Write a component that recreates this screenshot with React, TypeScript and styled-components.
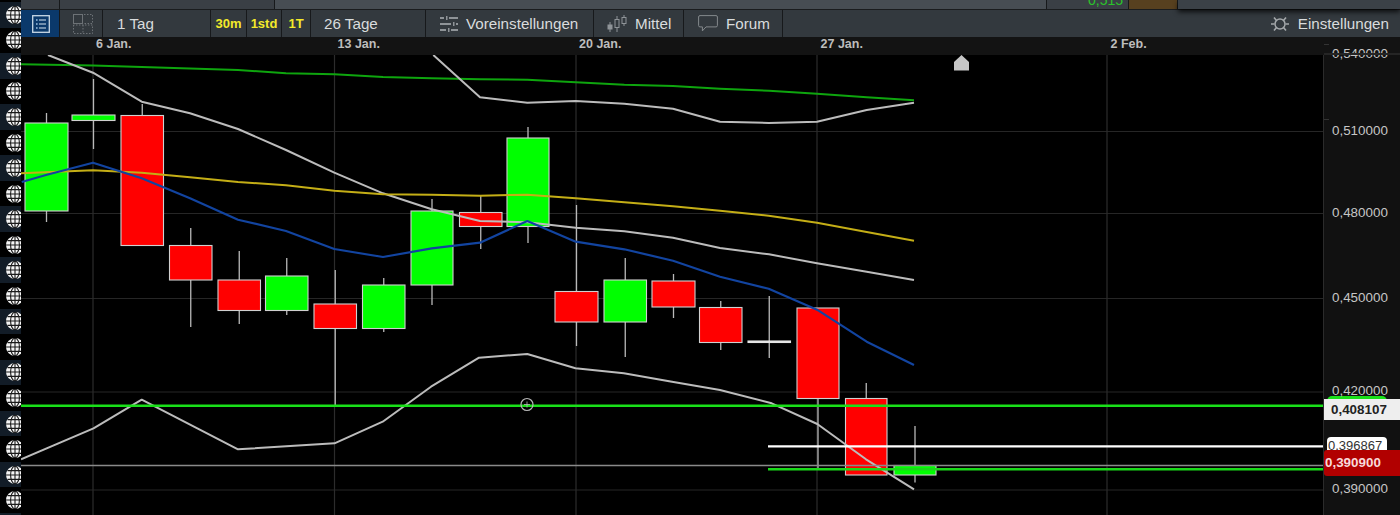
import React from "react";
import styled, { createGlobalStyle } from "styled-components";

const Global = createGlobalStyle`
  html, body { margin: 0; padding: 0; background: #000; overflow: hidden; }
  * { box-sizing: border-box; }
`;

const Frame = styled.div`
  display: grid;
  grid-template-columns: 21px 1fr;
  width: 1400px;
  height: 515px;
  overflow: hidden;
  background: #000;
  font-family: "Liberation Sans", Arial, sans-serif;
`;

const Rail = styled.div`
  display: flex;
  flex-direction: column;
  height: 515px;
  padding-top: 2px;
  overflow: hidden;
`;

const RailCell = styled.div`
  flex: 0 0 25.55px;
  display: flex;
  align-items: center;
  padding-left: 6px;
  overflow: hidden;
  background: #000;
  &:nth-child(odd) { background: #121c27; }
`;

const Main = styled.div`
  display: flex;
  flex-direction: column;
  min-width: 0;
`;

const TopStrip = styled.div`
  display: flex;
  flex: 0 0 9px;
  position: relative;
  z-index: 3;
`;

const StripCell = styled.div<{ $w: number; $bg: string }>`
  flex: 0 0 ${(p) => p.$w}px;
  background: ${(p) => p.$bg};
  border-right: 1px solid #17191b;
  overflow: hidden;
`;

const StripPrice = styled(StripCell)`
  display: flex;
  justify-content: flex-end;
  padding-right: 5px;
  color: #2ac42a;
  font-size: 14px;
  line-height: 14px;
`;

const StripPriceText = styled.span`
  margin-top: -7px;
`;

const StripPanel = styled.div`
  flex: 1;
  background: #3b4147;
  box-shadow: 0 3px 5px rgba(0, 0, 0, 0.75);
`;

const Toolbar = styled.div`
  display: flex;
  flex: 0 0 28px;
  align-items: stretch;
  background: #33393e;
  border-top: 1px solid #1a1c1e;
  color: #d9dcdd;
  font-size: 15.2px;
`;

const ToolItem = styled.div<{ $w: number; $pad?: number; $active?: boolean }>`
  flex: 0 0 ${(p) => p.$w}px;
  display: flex;
  align-items: center;
  padding-left: ${(p) => p.$pad ?? 0}px;
  background: ${(p) => (p.$active ? "#0b396b" : "transparent")};
  border-right: 1px solid #17191b;
  white-space: nowrap;
`;

const Interval = styled(ToolItem)`
  justify-content: center;
  color: #f4ea2a;
  font-size: 13px;
  font-weight: 700;
`;

const ToolText = styled.span<{ $gap?: number }>`
  margin-left: ${(p) => p.$gap ?? 0}px;
`;

const ToolEnd = styled.div`
  flex: 1;
  display: flex;
  align-items: center;
  justify-content: flex-end;
  gap: 9px;
  padding-right: 11px;
`;

const DateAxis = styled.div`
  display: flex;
  flex: 0 0 18px;
  background: #131313;
  color: #bdbdbd;
  font-size: 12.5px;
  font-weight: 700;
  line-height: 15px;
`;

const DateCell = styled.div<{ $w: number }>`
  flex: 0 0 ${(p) => p.$w}px;
  padding-left: 3px;
  white-space: nowrap;
`;

const ChartRow = styled.div`
  flex: 1;
  display: flex;
  min-height: 0;
`;

const Plot = styled.svg`
  display: block;
  flex: 0 0 1302px;
  height: 460px;
`;

const PriceAxis = styled.div`
  flex: 1;
  position: relative;
  background: #111;
  border-left: 1px solid #2b2b2b;
  color: #c6c6c6;
  font-size: 13.4px;
`;

const PriceLabel = styled.span`
  position: absolute;
  left: 8px;
  line-height: 16px;
  transform: translateY(-8px);
`;

const AxisRule = styled.div`
  position: absolute;
  left: 0;
  right: 0;
  top: -2px;
  height: 2px;
  background: #252525;
`;

const AxisTick = styled.div`
  position: absolute;
  left: 0;
  width: 5px;
  height: 1px;
  background: #333;
`;

const GreenTag = styled.div`
  position: absolute;
  left: 3px;
  top: 341px;
  width: 60px;
  height: 12px;
  border-radius: 5px 5px 0 0;
  background: #19e019;
`;

const LevelTag = styled.div`
  position: absolute;
  left: 0;
  right: 0;
  top: 344px;
  height: 21px;
  padding-left: 7px;
  background: #eeeeee;
  color: #222;
  font-weight: 700;
  line-height: 21px;
`;

const WhiteTag = styled.div`
  position: absolute;
  left: 3px;
  top: 382px;
  width: 60px;
  height: 16px;
  padding-left: 1px;
  border-radius: 4px 4px 0 0;
  background: #fff;
  color: #333;
  font-size: 13px;
  line-height: 17px;
  white-space: nowrap;
  overflow: hidden;
`;

const LastTag = styled.div`
  position: absolute;
  left: 0;
  right: 0;
  top: 395px;
  height: 26px;
  padding-left: 1px;
  border-radius: 3px 0 0 3px;
  background: #b10000;
  color: #f8dada;
  font-weight: 700;
  line-height: 26px;
`;

type Candle = [number, number, number, number, number, number, boolean];
const candles: Candle[] = [
  [25, 68, 123, 211, 113, 222, true],
  [72, 115, 115, 120.5, 79, 149, true],
  [121, 163.5, 115.5, 245.5, 104, 245, false],
  [169.5, 212, 245.5, 280, 228, 327, false],
  [218, 260.5, 280, 310.5, 251, 324, false],
  [265.5, 308, 276, 310.5, 258, 315, true],
  [314, 356.5, 304, 328.5, 270, 405, false],
  [362.5, 405, 285, 328.5, 278, 332, true],
  [411, 453, 211, 285, 199, 305, true],
  [459.5, 502, 212.5, 226.5, 196, 249, false],
  [507, 549, 138, 226.5, 127, 243, true],
  [555, 598, 291.5, 322, 205, 346, false],
  [604, 646.5, 280, 322, 258, 357, true],
  [652, 695, 281, 307, 274, 318, false],
  [699.5, 742, 307.5, 342.5, 301, 350, false],
  [748, 790.5, 341, 342.5, 296, 358, false],
  [797, 839, 308, 398.5, 308, 470, false],
  [845.5, 887, 398.5, 475, 383, 475, false],
  [894, 936, 465.5, 475, 426, 482.5, true],
];

const greenMA = "21,64.3 93,65.5 141.7,67 238,70 286,73.3 334.3,74.3 383,77 431.7,78.3 480,79.3 527.3,79.7 575.7,82.3 624.3,84.7 673,86 720,88.7 769,90.7 817,93.7 866.7,97.3 914,100.3";
const midBand = "48,55 93,72.7 141.7,101.7 190,113.3 238,129 286,150 334.3,172.7 383,193.3 431.7,209.3 480,221 527.3,222.3 575.7,227.7 624.3,231.3 673,237.7 720,248 769,254.3 817,263.3 866.7,271.7 914,280";
const upperBand = "433.3,55 480,97.3 527.3,102.7 575.7,101 624.3,103.7 673,108.7 720,121.7 768.7,123 817,121.7 866.7,110 914,102.7";
const yellowMA = "21,173.3 93,170.3 141.7,172.7 190,177.3 238,182 286,185.3 334.3,190.7 383,194.3 431.7,194.7 480,195.7 527.3,194.7 575.7,198.3 624.3,202.3 673,206.3 720,210.7 768.7,215.7 817,222.7 866.7,232 914,240.7";
const blueMA = "21.7,182 46,175 93,162.7 141.7,178.3 190,198.3 238,219.7 286,231 334.3,249 383,257 431.7,248.3 480,242.7 527.3,221 575.7,241.7 624.3,249.3 673,260.7 720,276.7 768.7,288.7 817,309.7 866.7,341.7 914,365";
const lowerBand = "21,459.3 93.5,428.3 141.7,399.7 238,449.3 334.5,443.3 382.7,421.7 431,386.7 479,357.7 527.3,354 575.5,368.3 623.8,373.3 672,381.7 720,390 771.7,403.3 817.3,424 866,459.3 914,489.3";

const Globe = () => (
  <svg width="18" height="18" viewBox="0 0 18 18" style={{ flex: "none" }}>
    <circle cx="9" cy="9" r="9" fill="#f4f4f4" />
    <g fill="none" stroke="#1a1a1a" strokeWidth="1.1">
      <ellipse cx="9" cy="9" rx="4.4" ry="8.8" />
      <path d="M9 0v18M0 9h18M1.6 4.6h14.8M1.6 13.4h14.8" />
    </g>
  </svg>
);

const ListIcon = () => (
  <svg width="18" height="18" viewBox="0 0 18 18" style={{ marginLeft: 11 }}>
    <rect x=".7" y=".7" width="16.6" height="16.6" fill="none" stroke="#c9d9e6" strokeWidth="1.3" />
    <path d="M4 5h1.6M4 9h1.6M4 13h1.6" stroke="#9fc4e6" strokeWidth="1.6" />
    <path d="M7 5h7M7 9h7M7 13h7" stroke="#d8e6f0" strokeWidth="1.2" />
  </svg>
);

const LayoutIcon = () => (
  <svg width="20" height="20" viewBox="0 0 20 20" style={{ marginLeft: 13 }}>
    <rect x=".5" y=".5" width="9" height="9" fill="none" stroke="#6d7276" />
    <path d="M11 .5h8.5v9H11M.5 11v8.5h19V11H.5M10 11v8" fill="none" stroke="#6d7276" strokeDasharray="1.5 1.5" />
  </svg>
);

const SlidersIcon = () => (
  <svg width="18" height="18" viewBox="0 0 18 18" style={{ flex: "none" }}>
    <g fill="#8f9498">
      <rect x="0" y="2" width="4" height="2" />
      <rect x="6" y="1" width="1.5" height="4" />
      <rect x="9" y="2" width="9" height="2" />
      <rect x="0" y="8" width="11" height="2" />
      <rect x="13" y="7" width="1.5" height="4" />
      <rect x="16" y="8" width="2" height="2" />
      <rect x="0" y="14" width="6" height="2" />
      <rect x="8" y="13" width="1.5" height="4" />
      <rect x="11" y="14" width="7" height="2" />
    </g>
  </svg>
);

const CandleIcon = () => (
  <svg width="20" height="18" viewBox="0 0 20 18" style={{ flex: "none" }} fill="none" stroke="#8f9498" strokeWidth="1">
    <path d="M3 7v10M10 1v16M17 0v11" />
    <rect x="1" y="10" width="4" height="4" fill="#8f9498" />
    <rect x="8" y="4.5" width="4" height="8" fill="#33393e" />
    <rect x="15" y="2.5" width="4" height="6" fill="#33393e" />
  </svg>
);

const ChatIcon = () => (
  <svg width="20" height="17" viewBox="0 0 20 17" style={{ flex: "none" }}>
    <path d="M2 .6h16a1.4 1.4 0 0 1 1.4 1.4v8.5a1.4 1.4 0 0 1-1.4 1.4H8l-3.6 4v-4H2a1.4 1.4 0 0 1-1.4-1.4V2A1.4 1.4 0 0 1 2 .6z" fill="none" stroke="#84898c" strokeWidth="1" />
  </svg>
);

const GearIcon = () => (
  <svg width="18" height="18" viewBox="0 0 18 18" style={{ flex: "none" }} fill="none" stroke="#a4a8ab">
    <circle cx="9" cy="9" r="5" strokeWidth="1.5" />
    <path d="M0 9h3.5M14.500 9H18M3 2.500l2.500 3M15 2.500l-2.500 3M3 15.500l2.500-3M15 15.500l-2.500-3" strokeWidth="1.6" />
  </svg>
);

const prices: [string, number][] = [
  ["0,540000", -1],
  ["0,510000", 76],
  ["0,480000", 158],
  ["0,450000", 243],
  ["0,420000", 336],
  ["0,390000", 434],
];

const dates: [string, number][] = [
  ["", 72],
  ["6 Jan.", 241.5],
  ["13 Jan.", 241.5],
  ["20 Jan.", 241.5],
  ["27 Jan.", 290],
  ["2 Feb.", 200],
];

const rails = Array.from({ length: 21 }, (_, i) => i);

export default function App() {
  return (
    <Frame>
      <Global />
      <Rail>
        {rails.map((i) => (
          <RailCell key={i}>
            <Globe />
          </RailCell>
        ))}
      </Rail>
      <Main>
        <TopStrip>
          <StripCell $w={39} $bg="#3a3f45" />
          <StripCell $w={215} $bg="#3a3f45" />
          <StripCell $w={772} $bg="#474d53" />
          <StripPrice $w={82} $bg="#3a3f45">
            <StripPriceText>0,515</StripPriceText>
          </StripPrice>
          <StripCell $w={49} $bg="#57401f" />
          <StripPanel />
        </TopStrip>
        <Toolbar>
          <ToolItem $w={39} $active>
            <ListIcon />
          </ToolItem>
          <ToolItem $w={43}>
            <LayoutIcon />
          </ToolItem>
          <ToolItem $w={108} $pad={14}>1 Tag</ToolItem>
          <Interval $w={36}>30m</Interval>
          <Interval $w={35}>1std</Interval>
          <Interval $w={29}>1T</Interval>
          <ToolItem $w={115} $pad={13}>26 Tage</ToolItem>
          <ToolItem $w={168} $pad={14}>
            <SlidersIcon />
            <ToolText $gap={8}>Voreinstellungen</ToolText>
          </ToolItem>
          <ToolItem $w={90} $pad={13}>
            <CandleIcon />
            <ToolText $gap={8}>Mittel</ToolText>
          </ToolItem>
          <ToolItem $w={99} $pad={14}>
            <ChatIcon />
            <ToolText $gap={8}>Forum</ToolText>
          </ToolItem>
          <ToolEnd>
            <GearIcon />
            <span>Einstellungen</span>
          </ToolEnd>
        </Toolbar>
        <DateAxis>
          {dates.map(([label, w]) => (
            <DateCell key={label || "lead"} $w={w}>{label}</DateCell>
          ))}
        </DateAxis>
        <ChartRow>
          <Plot viewBox="21 55 1302 460">
            <g stroke="#262626" strokeWidth="1.2">
              {[131.5, 213.5, 298.5, 392, 490].map((y) => (
                <line key={y} x1="21" x2="1323" y1={y} y2={y} />
              ))}
              {[93, 334.5, 576, 817, 1107].map((x) => (
                <line key={x} x1={x} x2={x} y1="55" y2="515" stroke="#2c2c2c" />
              ))}
            </g>
            {candles.map(([x1, x2, top, bottom, hi, lo, up], i) => {
              const c = (x1 + x2) / 2;
              return (
                <g key={i}>
                  <line x1={c} x2={c} y1={hi} y2={lo} stroke="#b9b9b9" strokeWidth="1.3" />
                  <rect x={x1} y={top} width={x2 - x1} height={bottom - top} fill={i === 15 ? "#e6e6e6" : up ? "#00ff00" : "#ff0000"} stroke={i === 15 ? "#e6e6e6" : "#d0d0d0"} strokeWidth="1.1" />
                </g>
              );
            })}
            <g fill="none" strokeWidth="2" strokeLinejoin="round">
              <polyline points={greenMA} stroke="#0ea50e" />
              <polyline points={upperBand} stroke="#bcbcbc" />
              <polyline points={midBand} stroke="#bcbcbc" />
              <polyline points={yellowMA} stroke="#c4ae16" />
              <polyline points={blueMA} stroke="#1244a0" strokeWidth="2.2" />
              <polyline points={lowerBand} stroke="#bcbcbc" />
            </g>
            <line x1="21" x2="1323" y1="465.5" y2="465.5" stroke="#8a8a8a" strokeWidth="1.6" />
            <line x1="21" x2="1323" y1="405.7" y2="405.7" stroke="#19e019" strokeWidth="2.6" />
            <line x1="768" x2="1323" y1="446.3" y2="446.3" stroke="#ffffff" strokeWidth="2.2" />
            <line x1="768" x2="1323" y1="469.3" y2="469.3" stroke="#19d919" strokeWidth="2.4" />
            <circle cx="527" cy="404.5" r="6" fill="none" stroke="#b5b5b5" strokeWidth="1.2" />
            <path d="M527 401.5v6M524 404.5h6" stroke="#b5b5b5" strokeWidth=".8" />
            <path d="M954 70.5V62l7.5-7 7.5 7v8.5z" fill="#c6c6c6" />
          </Plot>
          <PriceAxis>
            <GreenTag />
            {prices.map(([label, top]) => (
              <PriceLabel key={label} style={{ top }}>{label}</PriceLabel>
            ))}
            <AxisRule />
            <AxisTick style={{ top: -11 }} />
            <AxisTick style={{ top: 64 }} />
            <LevelTag>0,408107</LevelTag>
            <WhiteTag>0,396867</WhiteTag>
            <LastTag>0,390900</LastTag>
          </PriceAxis>
        </ChartRow>
      </Main>
    </Frame>
  );
}
